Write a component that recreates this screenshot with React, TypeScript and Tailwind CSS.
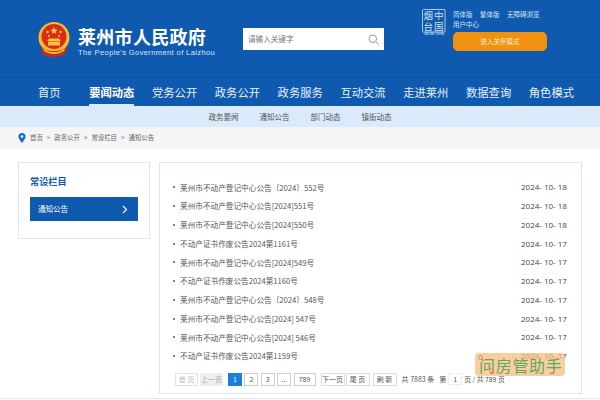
import React from 'react';

const cjk = { fontFamily: '"Noto Sans CJK SC", "Open Sans", sans-serif' };

const navItems = ['首页', '要闻动态', '党务公开', '政务公开', '政务服务', '互动交流', '走进莱州', '数据查询', '角色模式'];
const subNav = ['政务要闻', '通知公告', '部门动态', '镇街动态'];
const rows = [
  ['莱州市不动产登记中心公告〔2024〕552号', '2024- 10- 18'],
  ['莱州市不动产登记中心公告[2024]551号', '2024- 10- 18'],
  ['莱州市不动产登记中心公告[2024]550号', '2024- 10- 18'],
  ['不动产证书作废公告2024第1161号', '2024- 10- 17'],
  ['莱州市不动产登记中心公告[2024]549号', '2024- 10- 17'],
  ['不动产证书作废公告2024第1160号', '2024- 10- 17'],
  ['莱州市不动产登记中心公告〔2024〕548号', '2024- 10- 17'],
  ['莱州市不动产登记中心公告[2024] 547号', '2024- 10- 17'],
  ['莱州市不动产登记中心公告[2024] 546号', '2024- 10- 17'],
  ['不动产证书作废公告2024第1159号', '2024- 10- 17'],
];

function Emblem() {
  return (
    <svg width="32" height="35" viewBox="0 0 32 35" className="shrink-0">
      <circle cx="16" cy="15.500" r="15.500" fill="#f3bd2c" />
      <circle cx="16" cy="14.500" r="12.500" fill="#dc2a1c" />
      <path d="M16 5l1 2.600 2.700.1-2.100 1.700.7 2.600-2.300-1.500-2.300 1.500.7-2.600-2.100-1.700 2.700-.1z" fill="#f8d23c" />
      <circle cx="9.500" cy="10" r="1.200" fill="#f8d23c" />
      <circle cx="22.500" cy="10" r="1.200" fill="#f8d23c" />
      <circle cx="11" cy="14" r="1" fill="#f8d23c" />
      <circle cx="21" cy="14" r="1" fill="#f8d23c" />
      <path d="M9 19h14l-2-2.500H11zM10 19.500h12v4H10z" fill="#f6c63a" />
      <path d="M3 24c3 4 7 5 13 5s10-1 13-5l-1 7c-3 3-8 4-12 4s-9-1-12-4z" fill="#c9281c" />
      <path d="M5 26c4 4 8 4 11 4s7 0 11-4l-1 3c-3 2-7 3-10 3s-7-1-10-3z" fill="#f3bd2c" />
    </svg>
  );
}

function Seal() {
  return (
    <svg width="24" height="27" viewBox="0 0 24 27" className="shrink-0" fontFamily='"Noto Sans CJK SC", sans-serif' fill="#cfe0f3">
      <rect x="0.500" y="0.500" width="22.500" height="22.500" rx="1" fill="none" stroke="#a9c8ea" />
      <text x="1.500" y="10" fontSize="9.500">烟</text>
      <text x="12" y="10" fontSize="9.500">中</text>
      <text x="1.500" y="21" fontSize="9.500">台</text>
      <text x="12" y="21" fontSize="9.500">国</text>
      <text x="1.500" y="26" fontSize="3" fontFamily='"Liberation Sans", sans-serif'>YANTAI CHINA</text>
    </svg>
  );
}

function PageBtn({ label, className }: { label: string; className: string }) {
  return (
    <span className={`h-[13px] flex items-center justify-center border text-[7px] leading-none whitespace-nowrap ${className}`}>{label}</span>
  );
}

export default function App() {
  return (
    <div className="w-[600px] h-[400px] overflow-hidden bg-white flex flex-col text-[#555]" style={cjk}>
      <header className="bg-[#0f5aae] shrink-0">
        <div className="h-[78px] flex border-b border-[#0c4f9c]">
          <div className="ml-[38px] mt-[22px] flex items-start gap-[8px] w-[169px] shrink-0">
            <Emblem />
            <div className="text-white">
              <div className="text-[18px] leading-[24px] font-bold tracking-[0.3px] whitespace-nowrap mt-[2px]">莱州市人民政府</div>
              <div className="text-[7.500px] leading-[9px] tracking-[0.4px] text-[#d5e5f6] whitespace-nowrap" style={{ fontFamily: '"Liberation Sans", sans-serif' }}>The People's Government of Laizhou</div>
            </div>
          </div>
          <div className="ml-[36px] mt-[28px] w-[141px] h-[22px] bg-white flex items-center justify-between pl-[5px] pr-[5px] shrink-0">
            <span className="text-[7.600px] text-[#777]">请输入关键字</span>
            <svg width="11" height="11" viewBox="0 0 11 11" fill="none" stroke="#999" strokeWidth="1">
              <circle cx="4.800" cy="4.800" r="3.800" />
              <path d="M7.800 7.800l2.700 2.700" />
            </svg>
          </div>
          <div className="ml-[38px] mt-[9px] flex gap-[7px]">
            <Seal />
            <div className="w-[100px]">
              <div className="flex gap-[7.500px] text-[6.500px] leading-[10px] text-[#d5e5f6] whitespace-nowrap">
                <span>简体版</span>
                <span>繁体版</span>
                <span>无障碍浏览</span>
              </div>
              <div className="text-[6.500px] leading-[10px] text-[#d5e5f6]">用户中心</div>
              <div className="mt-[3px] w-[94px] h-[19px] rounded-[5px] bg-[#f0920f] text-[#fdeed6] text-[6.500px] flex items-center justify-center">进入关怀模式</div>
            </div>
          </div>
        </div>
        <nav className="h-[28px] pl-[38px] pt-[7px] flex gap-[17.600px]">
          {navItems.map((item, i) => (
            <a
              key={item}
              className={`h-full text-[11.300px] leading-[15px] whitespace-nowrap text-[#e8f1fb] ${i === 0 ? 'mr-[11px]' : ''} ${i === 1 ? 'font-bold text-white border-b-2 border-[#d9eafb]' : ''}`}
            >
              {item}
            </a>
          ))}
        </nav>
      </header>

      <div className="h-[21px] bg-[#dbeafa] flex items-center justify-center gap-[21px] text-[7.500px] text-[#555] shrink-0">
        {subNav.map(s => (
          <span key={s}>{s}</span>
        ))}
      </div>

      <div className="h-[22px] bg-[#f5f5f5] flex items-center pl-[18px] text-[6.400px] text-[#666] shrink-0">
        <svg width="8" height="10" viewBox="0 0 8 10" className="mr-[4px]">
          <path fillRule="evenodd" d="M4 0a3.600 3.600 0 0 1 3.600 3.600C7.600 6 4 10 4 10S.4 6 .4 3.600A3.600 3.600 0 0 1 4 0zm0 2.200a1.400 1.400 0 1 0 0 2.800 1.400 1.400 0 0 0 0-2.800z" fill="#0f6fd6" />
        </svg>
        <span>首页</span>
        <span className="mx-[4px]">&gt;</span>
        <span>政务公开</span>
        <span className="mx-[4px]">&gt;</span>
        <span>常设栏目</span>
        <span className="mx-[4px]">&gt;</span>
        <span>通知公告</span>
      </div>

      <div className="flex items-start pl-[18px] pt-[13px] gap-[9px] h-[250px] border-b border-[#e4e8ee] shrink-0">
        <aside className="w-[132px] h-[77px] border border-[#d9e6f5] pt-[11px] px-[11px] shrink-0">
          <h3 className="text-[9.200px] leading-[14px] font-bold text-[#0f5aae]">常设栏目</h3>
          <div className="mt-[9px] h-[24px] bg-[#0f5aae] text-white text-[7.500px] flex items-center justify-between pl-[8px] pr-[10px]">
            <span>通知公告</span>
            <svg width="6" height="9" viewBox="0 0 6 9" fill="none" stroke="#fff" strokeWidth="1.200">
              <path d="M1 1l3.500 3.500L1 8" />
            </svg>
          </div>
        </aside>
        <main className="relative w-[423px] h-[232px] border border-[#d9e6f5] pl-[13px] pr-[14px] pt-[15px] shrink-0">
          <ul className="flex flex-col">
            {rows.map(([title, date]) => (
              <li key={title} className="h-[18.750px] flex items-center justify-between text-[7.650px] text-[#555] whitespace-nowrap">
                <span className="flex items-center">
                  <span className="w-[2px] h-[2px] rounded-full bg-[#555] mr-[5px]" />
                  {title}
                </span>
                <span className="text-[8px] w-[46px] text-[#444]" style={{ fontFamily: '"Open Sans", sans-serif' }}>{date}</span>
              </li>
            ))}
          </ul>
          <div className="mt-[7px] ml-[2px] flex items-center text-[#555]">
            <div className="flex items-center gap-[2px]">
              <PageBtn label="首 页" className="w-[23px] border-[#e2e2e2] text-[#bbb]" />
              <PageBtn label="上一页" className="w-[23px] bg-[#eee] border-[#eee] text-[#aaa]" />
            </div>
            <div className="flex items-center gap-[2.400px] ml-[5px]">
              <PageBtn label="1" className="w-[14px] bg-[#1a7fe0] border-[#1a7fe0] text-white" />
              <PageBtn label="2" className="w-[14px] border-[#ccc]" />
              <PageBtn label="3" className="w-[14px] border-[#ccc]" />
              <PageBtn label="..." className="w-[14px] border-[#ccc]" />
              <PageBtn label="789" className="w-[22px] border-[#ccc]" />
            </div>
            <div className="flex items-center gap-[1px] ml-[5px]">
              <PageBtn label="下一页" className="w-[24px] border-[#ddd]" />
              <PageBtn label="尾 页" className="w-[24px] border-[#ddd]" />
              <PageBtn label="刷 新" className="w-[24px] border-[#ddd] ml-[2px]" />
            </div>
            <span className="ml-[5px] text-[7px] whitespace-nowrap">共 7883 条</span>
            <span className="ml-[5px] text-[7px] whitespace-nowrap">第</span>
            <span className="mx-[2px] w-[14px] h-[12px] border border-[#eee] flex items-center justify-center text-[7px]">1</span>
            <span className="text-[6.800px] whitespace-nowrap">页 / 共 789 页</span>
          </div>
          <div className="absolute left-[315px] top-[190px] w-[90px] h-[23px] rounded-[4px] bg-[#f8bd80]/75 flex items-center pl-[4px] text-[16px] tracking-[0.700px] leading-none text-[#63a763] whitespace-nowrap">
            问房管助手
            <span className="absolute left-[3px] top-[2px] w-[5px] h-[5px] rounded-full border border-[#f0835a]" />
            <span className="absolute left-[14px] top-[15px] w-[5px] h-[5px] rounded-full border border-[#f0835a]" />
          </div>
        </main>
      </div>
    </div>
  );
}
